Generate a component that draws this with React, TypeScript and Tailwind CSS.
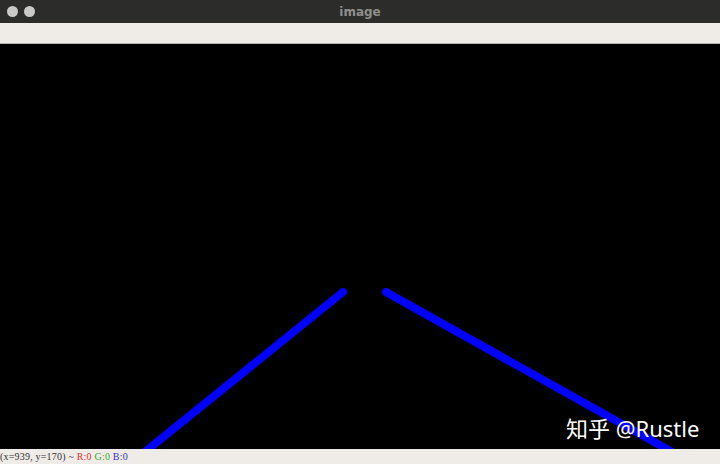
export default function App() {
  return (
    <div className="w-[720px] h-[464px] flex flex-col bg-black overflow-hidden font-['DejaVu_Sans',sans-serif]">
      {/* window title bar */}
      <div className="h-[23px] bg-[#2c2c2a] flex items-center relative shrink-0">
        <div className="flex gap-[6px] pl-[7px]">
          <span className="w-[11px] h-[11px] rounded-full bg-[#c9c9c7]" />
          <span className="w-[11px] h-[11px] rounded-full bg-[#c9c9c7]" />
        </div>
        <div className="absolute inset-0 flex items-center justify-center text-[12px] font-bold text-[#8f8f8c]">
          image
        </div>
      </div>

      {/* toolbar */}
      <div className="h-[21px] bg-[#efece7] border-b border-[#b9b6b0] shrink-0" />

      {/* canvas */}
      <div className="relative flex-1 bg-black">
        <svg width="720" height="405" className="block">
          <line x1="343" y1="248" x2="125" y2="424" stroke="#0000ff" strokeWidth="8" strokeLinecap="round" />
          <line x1="386" y1="248" x2="690" y2="418" stroke="#0000ff" strokeWidth="8" strokeLinecap="round" />
        </svg>
        <div className="absolute left-[566px] top-[373px] text-[22px] leading-none text-white font-['Noto_Sans','Noto_Sans_CJK_SC',sans-serif]">
          知乎 @Rustle
        </div>
      </div>

      {/* status bar */}
      <div className="h-[15px] bg-[#efece7] shrink-0 flex items-center text-[10px] tracking-[0.2px] leading-none text-[#333] font-['Liberation_Serif','DejaVu_Serif',serif] whitespace-pre">
        <span>(x=939, y=170) ~ </span>
        <span className="text-[#d33]">R:0 </span>
        <span className="text-[#3a3]">G:0 </span>
        <span className="text-[#33c]">B:0</span>
      </div>
    </div>
  );
}
